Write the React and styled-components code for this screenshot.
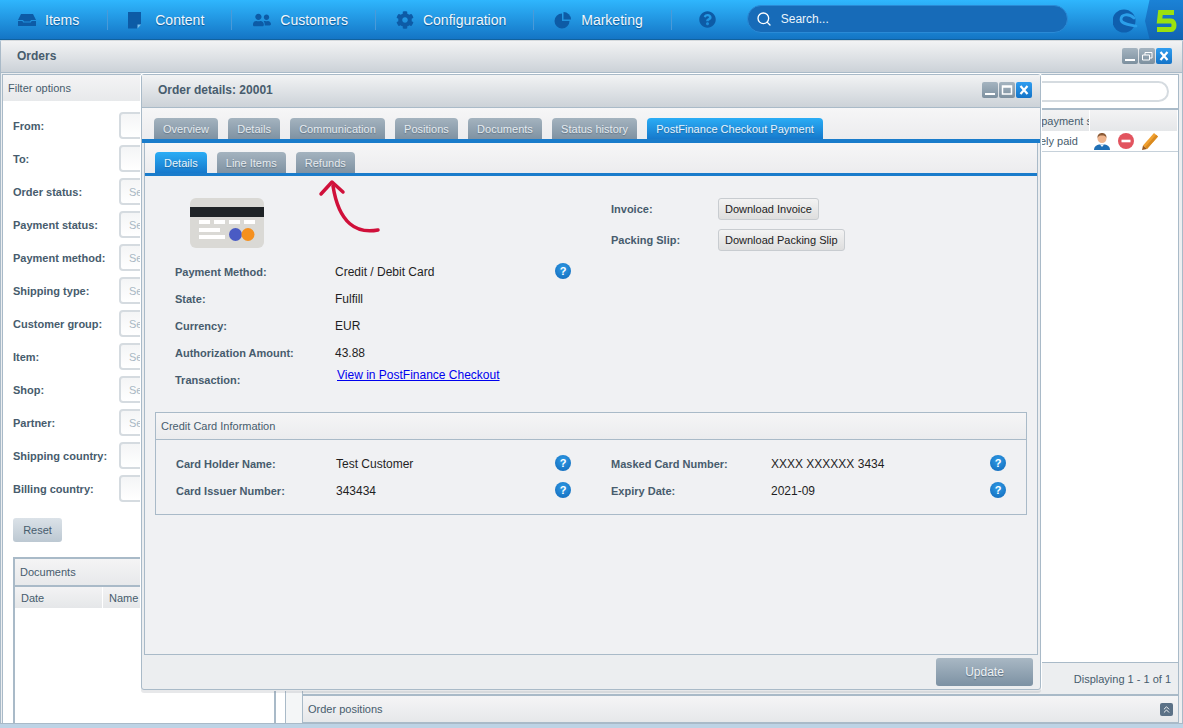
import React from 'react';
import styled, { createGlobalStyle } from 'styled-components';
import { FaUserFriends, FaCog, FaQuestionCircle } from 'react-icons/fa';
import { Search, ChevronsUp } from 'lucide-react';

const Global = createGlobalStyle`
  html, body { margin: 0; padding: 0; }
  body {
    font-family: "Liberation Sans", Arial, sans-serif;
    font-size: 11px;
    color: #475c6d;
    background: #bdd3e5;
    overflow: hidden;
  }
  * { box-sizing: border-box; }
`;

const Page = styled.div`
  position: relative;
  width: 1183px;
  height: 728px;
  overflow: hidden;
  display: flex;
  flex-direction: column;
`;

const TopBar = styled.nav`
  height: 40px;
  flex: none;
  display: flex;
  align-items: center;
  background: linear-gradient(#2fb6fd, #1475c5);
  border-bottom: 1px solid #10629f;
`;

const NavItem = styled.div`
  height: 20px;
  display: flex;
  align-items: center;
  gap: 9px;
  padding: 0 ${p => p.$right}px 0 ${p => p.$left}px;
  border-right: 1px solid #4a9ad8;
  color: #f1f8fd;
  font-size: 14px;
  text-shadow: 0 1px 1px #0b5796;
  svg { flex: none; width: 18px; height: 18px; color: #0d5ba6; }
`;

const HelpButton = styled.div`
  width: 75px;
  display: flex;
  justify-content: center;
  padding-right: 4px;
  svg { width: 17px; height: 17px; color: #0d5ba6; }
`;

const SearchBox = styled.div`
  width: 321px;
  height: 28px;
  margin-top: -2px;
  padding-left: 8px;
  display: flex;
  align-items: center;
  gap: 9px;
  background: #176bb8;
  border: 1px solid #2a8ad6;
  border-radius: 14px;
  color: #eaf4fb;
  font-size: 12px;
  svg { color: #fff; }
`;

const LogoArea = styled.div`
  margin-left: auto;
  display: flex;
  align-items: center;
  height: 39px;
  svg { display: block; }
`;

const Desk = styled.div`
  flex: 1;
  display: flex;
  flex-direction: column;
  margin-bottom: 4px;
  background: #eceef0;
  border: 1px solid #a9bac8;
  border-top-color: #d5d9dc;
  border-radius: 3px 3px 0 0;
  min-height: 0;
`;

const WindowHeader = styled.header`
  height: ${p => p.$height}px;
  flex: none;
  display: flex;
  align-items: center;
  justify-content: space-between;
  padding: 0 ${p => p.$right}px 2px ${p => p.$left}px;
  background: linear-gradient(#f2f3f4, #ccd2d8);
  border-bottom: 1px solid #a9bac8;
  font-size: 12px;
  font-weight: bold;
  color: #475c6d;
`;

const WindowButtons = styled.div`
  display: flex;
  gap: 1px;
`;

const WindowButton = styled.div`
  width: 16px;
  height: 16px;
  border-radius: 2px;
  background: ${p => (p.$close ? 'linear-gradient(#2f9df0, #1474c8)' : 'linear-gradient(#a5b4c0, #7d909f)')};
  svg { display: block; }
`;

const DeskBody = styled.div`
  flex: 1;
  min-height: 0;
  display: flex;
  padding: 1px 1px 0 1px;
`;

const FilterPanel = styled.aside`
  width: 284px;
  flex: none;
  display: flex;
  flex-direction: column;
  background: #fff;
  border: 1px solid #a9bac8;
  border-bottom: none;
`;

const PanelTitle = styled.div`
  height: 26px;
  flex: none;
  display: flex;
  align-items: center;
  justify-content: space-between;
  padding: 0 5px;
  background: linear-gradient(#f4f4f5, #e7e9eb);
  font-size: 11px;
  color: #475c6d;
`;

const FilterList = styled.div`
  padding: 11px 0 0 10px;
  display: flex;
  flex-direction: column;
  gap: 6px;
`;

const FilterRow = styled.div`
  display: flex;
  align-items: center;
  height: 27px;
`;

const FilterLabel = styled.label`
  width: 106px;
  flex: none;
  font-weight: bold;
  color: #475c6d;
`;

const FilterInput = styled.div`
  width: 150px;
  height: 27px;
  padding-left: 8px;
  display: flex;
  align-items: center;
  background: linear-gradient(#f4f5f6, #fff);
  border: 2px solid #d5dbe0;
  border-radius: 4px;
  color: #a9b8c4;
`;

const ResetButton = styled.button`
  width: 49px;
  height: 24px;
  margin: 16px 0 0 10px;
  padding: 0;
  border: none;
  border-radius: 3px;
  background: linear-gradient(#dbe2e8, #bcc8d2);
  font: 11px "Liberation Sans", Arial, sans-serif;
  color: #475c6d;
`;

const DocumentsPanel = styled.section`
  flex: 1;
  margin: 15px 9px 0 10px;
  display: flex;
  flex-direction: column;
  border: 2px solid #a9bac8;
  border-bottom: none;
  min-height: 0;
`;

const ColumnHeader = styled.div`
  height: 23px;
  flex: none;
  display: flex;
  align-items: center;
  background: linear-gradient(#f3f3f4, #e5e7e9);
  border-top: 2px solid #a9bac8;
`;

const HeaderCell = styled.div`
  width: ${p => p.$width}px;
  flex: ${p => (p.$width ? 'none' : 1)};
  height: 100%;
  display: flex;
  align-items: center;
  padding-left: ${p => p.$pad || 6}px;
  border-right: 1px solid #fff;
  white-space: nowrap;
  overflow: hidden;
`;

const MiddleStrip = styled.div`
  width: 16px;
  flex: none;
  background: #f4f6f7;
`;

const OrdersPanel = styled.main`
  flex: 1;
  min-width: 0;
  display: flex;
  flex-direction: column;
  margin-right: 2px;
  border-left: 1px solid #a9bac8;
`;

const OrdersGrid = styled.div`
  flex: 1;
  display: flex;
  flex-direction: column;
  min-height: 0;
  background: #fff;
  border: 1px solid #a9bac8;
  border-left: none;
`;

const Toolbar = styled.div`
  height: 33px;
  flex: none;
  display: flex;
  align-items: center;
  justify-content: flex-end;
  padding-right: 9px;
`;

const GridSearch = styled.div`
  width: 300px;
  height: 21px;
  background: #fff;
  border: 2px solid #d5dbe0;
  border-radius: 11px;
`;

const GridRow = styled.div`
  height: 21px;
  flex: none;
  display: flex;
  align-items: center;
  padding-bottom: 1px;
  border-bottom: 1px solid #c6d1da;
`;

const GridCell = styled.div`
  width: ${p => p.$width}px;
  flex: ${p => (p.$width ? 'none' : 1)};
  padding-left: ${p => p.$pad || 2}px;
  white-space: nowrap;
  overflow: hidden;
`;

const RowActions = styled.div`
  display: flex;
  align-items: center;
  gap: 6px;
  svg { display: block; width: 18px; height: 18px; }
`;

const GridFooter = styled.div`
  height: 32px;
  margin-top: auto;
  flex: none;
  display: flex;
  align-items: center;
  justify-content: flex-end;
  padding-right: 7px;
  background: #eceef0;
  border-top: 1px solid #a9bac8;
  font-size: 11px;
`;

const CollapsedBar = styled.div`
  height: 28px;
  flex: none;
  display: flex;
  align-items: center;
  justify-content: space-between;
  padding: 0 5px;
  background: linear-gradient(#f5f5f6, #e6e8ea);
  border: 1px solid #a9bac8;
  border-left: none;
`;

const CollapseButton = styled.div`
  width: 13px;
  height: 13px;
  display: flex;
  align-items: center;
  justify-content: center;
  border-radius: 2px;
  background: #5b7186;
  color: #fff;
`;

/* floating order window */
const Modal = styled.div`
  position: absolute;
  left: 141px;
  top: 74px;
  width: 900px;
  height: 616px;
  display: flex;
  flex-direction: column;
  background: #eceef0;
  border: 1px solid #a9bac8;
  border-radius: 3px;
  box-shadow: 0 3px 0 rgba(120, 130, 140, 0.18), 0 0 0 1px #fff;
`;

const TabBar = styled.div`
  flex: none;
  height: ${p => p.$height}px;
  display: flex;
  align-items: flex-end;
  gap: ${p => p.$gap}px;
  padding-left: ${p => p.$left}px;
  background: linear-gradient(#f6f6f7, #ececee);
  border-bottom: ${p => p.$line}px solid #1a7ccb;
`;

const Tab = styled.div`
  height: 21px;
  padding: 0 9px;
  display: flex;
  align-items: center;
  border-radius: 4px 4px 0 0;
  font-size: 11px;
  letter-spacing: 0.02px;
  white-space: nowrap;
  color: ${p => (p.$active ? '#e8f4fd' : '#e6ebef')};
  background: ${p => (p.$active ? 'linear-gradient(#2badf5, #1679cc)' : 'linear-gradient(#a4b3bf, #7f92a2)')};
  text-shadow: 0 1px 1px rgba(40, 60, 80, 0.4);
`;

const TabContent = styled.div`
  flex: 1;
  display: flex;
  flex-direction: column;
  margin: 0 2px;
  min-height: 0;
  background: #f0f1f3;
  border-left: 1px solid #a9bac8;
  border-right: 1px solid #a9bac8;
  border-bottom: 1px solid #a9bac8;
`;

const DetailsArea = styled.div`
  position: relative;
  flex: none;
  height: 236px;
  display: grid;
  grid-template-columns: 436px 1fr;
  padding: 22px 0 0 30px;
`;

const PaymentColumn = styled.div`
  display: flex;
  flex-direction: column;
`;

const CardLogo = styled.svg`
  display: block;
  margin: 0 0 10px 15px;
`;

const InfoRow = styled.div`
  height: 27px;
  display: grid;
  grid-template-columns: 160px ${p => p.$value || 220}px 16px;
  align-items: center;
`;

const InfoLabel = styled.div`
  font-weight: bold;
  color: #475c6d;
`;

const InfoValue = styled.div`
  padding-top: 1px;
  font-size: 12px;
  color: #1f1f1f;
`;

const TransactionLink = styled.a`
  font-size: 12px;
  color: #0000ee;
  text-decoration: underline;
  margin: -10px 0 0 2px;
`;

const HelpBadge = styled.span`
  width: 16px;
  height: 16px;
  margin-top: -2px;
  display: flex;
  align-items: center;
  justify-content: center;
  border-radius: 50%;
  background: radial-gradient(circle at 50% 35%, #2f9be6, #1067b8);
  color: #fff;
  font-size: 11px;
  font-weight: bold;
`;

const DownloadColumn = styled.div`
  display: flex;
  flex-direction: column;
  gap: 9px;
`;

const DownloadRow = styled.div`
  display: flex;
  align-items: center;
  height: 22px;
`;

const DownloadLabel = styled(InfoLabel)`
  width: 107px;
`;

const DownloadButton = styled.button`
  height: 22px;
  padding: 0 6px;
  background: linear-gradient(#f3f3f3, #dedede);
  border: 1px solid #c8ccd0;
  border-radius: 3px;
  font: 11px "Liberation Sans", Arial, sans-serif;
  color: #222;
`;

const Arrow = styled.svg`
  position: absolute;
  left: 172px;
  top: 2px;
`;

const CardFieldset = styled.section`
  margin: 0 10px;
  height: 103px;
  border: 1px solid #a9bac8;
`;

const FieldsetTitle = styled.div`
  height: 27px;
  display: flex;
  align-items: center;
  padding-left: 5px;
  background: linear-gradient(#f5f5f6, #ebecee);
  border-bottom: 1px solid #a9bac8;
  color: #475c6d;
`;

const FieldsetBody = styled.div`
  display: grid;
  grid-template-columns: 435px 1fr;
  grid-auto-rows: 27px;
  padding: 10px 0 0 20px;
`;

const WindowFooter = styled.div`
  height: 34px;
  flex: none;
  display: flex;
  align-items: center;
  justify-content: flex-end;
  padding-right: 7px;
`;

const UpdateButton = styled.button`
  width: 97px;
  height: 28px;
  border: none;
  border-radius: 3px;
  background: linear-gradient(#a9b8c4, #7c91a3);
  font: 12px "Liberation Sans", Arial, sans-serif;
  color: #eef2f5;
  text-shadow: 0 1px 1px rgba(40, 60, 80, 0.5);
`;

const filters = [
  ['From:', ''], ['To:', ''], ['Order status:', 'Select'], ['Payment status:', 'Select'],
  ['Payment method:', 'Select'], ['Shipping type:', 'Select'], ['Customer group:', 'Select'],
  ['Item:', 'Select'], ['Shop:', 'Select'], ['Partner:', 'Select'],
  ['Shipping country:', ''], ['Billing country:', ''],
];

const mainTabs = ['Overview', 'Details', 'Communication', 'Positions', 'Documents', 'Status history'];

const payment = [
  ['Payment Method:', 'Credit / Debit Card', true],
  ['State:', 'Fulfill'],
  ['Currency:', 'EUR'],
  ['Authorization Amount:', '43.88'],
];

const cardInfo = [
  ['Card Holder Name:', 'Test Customer'],
  ['Masked Card Number:', 'XXXX XXXXXX 3434'],
  ['Card Issuer Number:', '343434'],
  ['Expiry Date:', '2021-09'],
];

const ItemsIcon = () => (
  <svg viewBox="0 0 18 18">
    <path fill="currentColor" d="M3 3h12l3 6h-5l-1 1.500H6L5 9H0z" />
    <path fill="currentColor" d="M0 10h4.300l1 1.500h7.400l1-1.500H18v5H0z" />
  </svg>
);

const ContentIcon = () => (
  <svg viewBox="0 0 18 18">
    <path fill="currentColor" d="M0 1h13v12l-4 4.500H0z" />
    <path fill="#7cc0ee" d="M9.500 17.500l3.500-4H9.500z" />
  </svg>
);

const PieIcon = () => (
  <svg viewBox="0 0 18 18">
    <path fill="currentColor" d="M8 2.500v7.500h7.500A7.500 7.500 0 1 1 8 2.500z" />
    <path fill="currentColor" d="M9.500 1A7.500 7.500 0 0 1 17 8.500H9.500z" />
  </svg>
);

const WindowGlyph = ({ type }) => (
  <svg width="16" height="16" viewBox="0 0 16 16" fill="none" stroke="#fff">
    {type === 'min' && <path d="M3 12h10" strokeWidth="2" />}
    {type === 'restore' && <path d="M3.500 7h7v5h-7zM6 7V4.500h7V10h-2.500" strokeWidth="1" />}
    {type === 'max' && <path d="M3.500 4h9v8h-9zM3.500 5h9" strokeWidth="1.500" />}
    {type === 'close' && <path d="M4.500 4l7 8M11.500 4l-7 8" strokeWidth="2.200" />}
  </svg>
);

const PersonIcon = () => (
  <svg viewBox="0 0 18 18">
    <path fill="#1f6fb5" d="M1 18c0-4 3-5 5-5.500h6c2 .5 5 1.500 5 5.500z" />
    <path fill="#f2f6f9" d="M7 12.500h4L9 15z" />
    <circle cx="9" cy="6.500" r="4.500" fill="#eeb48d" />
    <path fill="#8a5a36" d="M4.500 6C4.300 2 7 1 9 1s4.700 1 4.500 5c-1-2-2-2.500-4.500-2.500S5.500 4 4.500 6z" />
  </svg>
);

const StopIcon = () => (
  <svg viewBox="0 0 18 18">
    <circle cx="9" cy="9" r="8" fill="#e2545f" />
    <rect x="4.500" y="7.700" width="9" height="2.600" fill="#fff" />
  </svg>
);

const PencilIcon = () => (
  <svg viewBox="0 0 18 18">
    <path fill="#f0a030" d="M13 1l4 3.500L6 17l-4-3.500z" />
    <path fill="#9a5a20" d="M2 13.500L6 17l-5 1z" />
    <path fill="#d98a20" d="M15 2.800l2 1.700L6 17l-2-1.700z" />
  </svg>
);

const App = () => (
  <Page>
    <Global />
    <TopBar>
      <NavItem $left={18} $right={28}><ItemsIcon />Items</NavItem>
      <NavItem $left={20} $right={27}><ContentIcon />Content</NavItem>
      <NavItem $left={21} $right={27}><FaUserFriends />Customers</NavItem>
      <NavItem $left={20} $right={27}><FaCog />Configuration</NavItem>
      <NavItem $left={20} $right={28}><PieIcon />Marketing</NavItem>
      <HelpButton><FaQuestionCircle /></HelpButton>
      <SearchBox><Search size={16} strokeWidth={2} />Search...</SearchBox>
      <LogoArea>
        <svg width="70" height="39" viewBox="0 0 70 39">
          <defs>
            <linearGradient id="logoBg" x1="0" y1="0" x2="0" y2="1">
              <stop offset="0" stopColor="#1b82d6" />
              <stop offset="1" stopColor="#1264b3" />
            </linearGradient>
          </defs>
          <circle cx="11" cy="21" r="11.500" fill="#0f5fae" />
          <path fill="none" stroke="#2b9fe9" strokeWidth="2.800" strokeLinecap="round" d="M21 18C16 13 8 14 8 19.500C8 24 16 24.500 23 26" />
          <path fill="url(#logoBg)" d="M36.500 0H70V39H36.500L32 21z" />
          <path fill="none" stroke="#9be10f" strokeWidth="5" d="M61 12.500H47.500L46.500 21H58C62 21 62 29.500 58 29.500H44" />
        </svg>
      </LogoArea>
    </TopBar>

    <Desk>
      <WindowHeader $height={32} $left={16} $right={10}>
        Orders
        <WindowButtons>
          <WindowButton><WindowGlyph type="min" /></WindowButton>
          <WindowButton><WindowGlyph type="restore" /></WindowButton>
          <WindowButton $close><WindowGlyph type="close" /></WindowButton>
        </WindowButtons>
      </WindowHeader>
      <DeskBody>
        <FilterPanel>
          <PanelTitle>Filter options</PanelTitle>
          <FilterList>
            {filters.map(([label, placeholder]) => (
              <FilterRow key={label}>
                <FilterLabel>{label}</FilterLabel>
                <FilterInput>{placeholder}</FilterInput>
              </FilterRow>
            ))}
          </FilterList>
          <ResetButton>Reset</ResetButton>
          <DocumentsPanel>
            <PanelTitle>Documents</PanelTitle>
            <ColumnHeader>
              <HeaderCell $width={88}>Date</HeaderCell>
              <HeaderCell>Name</HeaderCell>
            </ColumnHeader>
          </DocumentsPanel>
        </FilterPanel>
        <MiddleStrip />
        <OrdersPanel>
          <OrdersGrid>
            <Toolbar><GridSearch /></Toolbar>
            <ColumnHeader>
              <HeaderCell />
              <HeaderCell $width={93} $pad={13}>Order payment status</HeaderCell>
              <HeaderCell $width={88} />
            </ColumnHeader>
            <GridRow>
              <GridCell />
              <GridCell $width={93}>Completely paid</GridCell>
              <GridCell $width={88} $pad={3}>
                <RowActions>
                  <PersonIcon />
                  <StopIcon />
                  <PencilIcon />
                </RowActions>
              </GridCell>
            </GridRow>
            <GridFooter>Displaying 1 - 1 of 1</GridFooter>
          </OrdersGrid>
          <CollapsedBar>
            Order positions
            <CollapseButton><ChevronsUp size={11} strokeWidth={2} /></CollapseButton>
          </CollapsedBar>
        </OrdersPanel>
      </DeskBody>
    </Desk>

    <Modal>
      <WindowHeader $height={33} $left={16} $right={8}>
        Order details: 20001
        <WindowButtons>
          <WindowButton><WindowGlyph type="min" /></WindowButton>
          <WindowButton><WindowGlyph type="max" /></WindowButton>
          <WindowButton $close><WindowGlyph type="close" /></WindowButton>
        </WindowButtons>
      </WindowHeader>
      <TabBar $height={35} $gap={10.2} $left={12} $line={4}>
        {mainTabs.map(name => <Tab key={name}>{name}</Tab>)}
        <Tab $active>PostFinance Checkout Payment</Tab>
      </TabBar>
      <TabContent>
        <TabBar $height={33} $gap={10} $left={10} $line={3}>
          <Tab $active>Details</Tab>
          <Tab>Line Items</Tab>
          <Tab>Refunds</Tab>
        </TabBar>
        <DetailsArea>
          <PaymentColumn>
            <CardLogo width="74" height="50" viewBox="0 0 74 50">
              <rect width="74" height="50" rx="6" fill="#dad9d5" />
              <rect y="9" width="74" height="10" fill="#1f2326" />
              <path fill="#fff" d="M9 22h11v4H9zM24 22h11v4H24zM39 22h11v4H39zM54 22h11v4H54zM9 30h21v4H9zM9 37h26v4H9z" />
              <circle cx="45.500" cy="36.500" r="6.500" fill="#4a5bc4" />
              <circle cx="58" cy="36.500" r="6.500" fill="#f5901e" />
            </CardLogo>
            {payment.map(([label, value, help]) => (
              <InfoRow key={label}>
                <InfoLabel>{label}</InfoLabel>
                <InfoValue>{value}</InfoValue>
                {help && <HelpBadge>?</HelpBadge>}
              </InfoRow>
            ))}
            <InfoRow>
              <InfoLabel>Transaction:</InfoLabel>
              <TransactionLink href="#">View in PostFinance Checkout</TransactionLink>
            </InfoRow>
          </PaymentColumn>
          <DownloadColumn>
            <DownloadRow>
              <DownloadLabel>Invoice:</DownloadLabel>
              <DownloadButton>Download Invoice</DownloadButton>
            </DownloadRow>
            <DownloadRow>
              <DownloadLabel>Packing Slip:</DownloadLabel>
              <DownloadButton>Download Packing Slip</DownloadButton>
            </DownloadRow>
          </DownloadColumn>
          <Arrow width="70" height="60" viewBox="0 0 70 60" fill="none" stroke="#d0103a" strokeWidth="3.500" strokeLinecap="round" strokeLinejoin="round">
            <path d="M61 52C40 56 22 46 16 8" />
            <path d="M4 16L15 4l11 10" />
          </Arrow>
        </DetailsArea>
        <CardFieldset>
          <FieldsetTitle>Credit Card Information</FieldsetTitle>
          <FieldsetBody>
            {cardInfo.map(([label, value]) => (
              <InfoRow key={label} $value={219}>
                <InfoLabel>{label}</InfoLabel>
                <InfoValue>{value}</InfoValue>
                <HelpBadge>?</HelpBadge>
              </InfoRow>
            ))}
          </FieldsetBody>
        </CardFieldset>
      </TabContent>
      <WindowFooter><UpdateButton>Update</UpdateButton></WindowFooter>
    </Modal>
  </Page>
);

export default App;
